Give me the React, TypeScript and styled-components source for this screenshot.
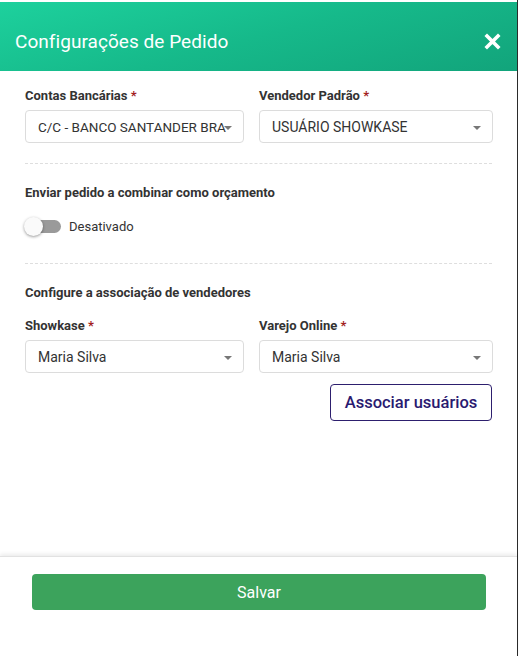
import styled, { createGlobalStyle } from 'styled-components';

const GlobalStyle = createGlobalStyle`
  * { box-sizing: border-box; }
  html, body { margin: 0; padding: 0; background: #fff; }
  body { font-family: Roboto, "Liberation Sans", Arial, sans-serif; color: #333; }
`;

function App() {
  return (
    <>
      <GlobalStyle />
      <Panel>
        <Header>
          <Title>Configurações de Pedido</Title>
          <CloseButton aria-label="Fechar">
            <svg width="17" height="17" viewBox="0 0 17 17">
              <path d="M3 3 L14 14 M14 3 L3 14" stroke="#fff" strokeWidth="3.6" strokeLinecap="square" />
            </svg>
          </CloseButton>
        </Header>

        <Body>
          <Row>
            <Field>
              <Label>
                Contas Bancárias <Req>*</Req>
              </Label>
              <Select>
                <SelectText $small>C/C - BANCO SANTANDER BRA</SelectText>
                <Caret />
              </Select>
            </Field>
            <Field>
              <Label>
                Vendedor Padrão <Req>*</Req>
              </Label>
              <Select>
                <SelectText>USUÁRIO SHOWKASE</SelectText>
                <Caret />
              </Select>
            </Field>
          </Row>

          <Divider />

          <Section>
            <Label>Enviar pedido a combinar como orçamento</Label>
            <SwitchRow>
              <Track>
                <Thumb />
              </Track>
              <SwitchText>Desativado</SwitchText>
            </SwitchRow>
          </Section>

          <Divider />

          <Section>
            <Label>Configure a associação de vendedores</Label>
            <Row $spaced>
              <Field>
                <Label>
                  Showkase <Req>*</Req>
                </Label>
                <Select>
                  <SelectText>Maria Silva</SelectText>
                  <Caret />
                </Select>
              </Field>
              <Field>
                <Label>
                  Varejo Online <Req>*</Req>
                </Label>
                <Select>
                  <SelectText>Maria Silva</SelectText>
                  <Caret />
                </Select>
              </Field>
            </Row>
            <Actions>
              <OutlineButton>Associar usuários</OutlineButton>
            </Actions>
          </Section>
        </Body>

        <Footer>
          <SaveButton>Salvar</SaveButton>
        </Footer>
      </Panel>
    </>
  );
}

export default App;

const Panel = styled.div`
  width: 518px;
  height: 656px;
  padding-top: 2px;
  border-right: 1px solid #2b2b2b;
  display: flex;
  flex-direction: column;
  background: #fff;
`;

const Header = styled.div`
  height: 69px;
  flex-shrink: 0;
  display: flex;
  align-items: center;
  justify-content: space-between;
  padding: 9px 16px 0 15px;
  background: linear-gradient(165deg, #1dd19d 0%, #16b98a 50%, #12a47b 100%);
`;

const Title = styled.h1`
  margin: 0;
  font-size: 19px;
  font-weight: 400;
  color: #fff;
  letter-spacing: 0.05px;
`;

const CloseButton = styled.button`
  border: 0;
  background: none;
  padding: 0;
  width: 17px;
  height: 17px;
  display: flex;
  cursor: pointer;
`;

const Body = styled.div`
  flex: 1;
  padding: 17px 25px 0 25px;
  box-sizing: content-box;
  width: 467px;
`;

const Row = styled.div<{ $spaced?: boolean }>`
  display: grid;
  grid-template-columns: 219px 234px;
  column-gap: 15px;
  margin-top: ${(p) => (p.$spaced ? '11px' : '0')};
`;

const Field = styled.div`
  display: flex;
  flex-direction: column;
`;

const Section = styled.div`
  display: flex;
  flex-direction: column;
`;

const Label = styled.div`
  font-size: 13px;
  font-weight: 700;
  color: #333;
  line-height: 15px;
  margin-bottom: 7px;
  white-space: nowrap;
`;

const Req = styled.span`
  color: #a31f1f;
`;

const Select = styled.div`
  position: relative;
  height: 33px;
  border: 1px solid #dcdcdc;
  border-radius: 4px;
  display: flex;
  align-items: center;
  padding: 0 12px;
  background: #fff;
`;

const SelectText = styled.span<{ $small?: boolean }>`
  font-size: ${(p) => (p.$small ? '13.5px' : '14px')};
  color: #333;
  white-space: nowrap;
  flex: 1;
`;

const Caret = styled.span`
  position: absolute;
  right: 11px;
  top: 15px;
  width: 0;
  height: 0;
  border-left: 4px solid transparent;
  border-right: 4px solid transparent;
  border-top: 4px solid #777;
`;

const Divider = styled.div`
  border-top: 1px dashed #dedede;
  margin: 20px 0 21px;
`;

const SwitchRow = styled.div`
  display: flex;
  align-items: center;
  height: 20px;
  margin-top: 9px;
  margin-bottom: 7px;
`;

const Track = styled.div`
  position: relative;
  width: 34px;
  height: 13px;
  border-radius: 7px;
  background: #9a9a9a;
  margin-left: 2px;
`;

const Thumb = styled.span`
  position: absolute;
  left: -3px;
  top: -3px;
  width: 19px;
  height: 19px;
  border-radius: 50%;
  background: #fafafa;
  box-shadow: 0 1px 3px rgba(0, 0, 0, 0.4);
`;

const SwitchText = styled.span`
  font-size: 13px;
  color: #333;
  margin-left: 8px;
`;

const Actions = styled.div`
  display: flex;
  justify-content: flex-end;
  margin-top: 11px;
`;

const OutlineButton = styled.button`
  width: 162px;
  height: 37px;
  border: 1px solid #2d1f6e;
  border-radius: 4px;
  background: #fff;
  color: #2a1a70;
  font-family: Roboto, "Liberation Sans", Arial, sans-serif;
  font-size: 16.5px;
  font-weight: 500;
  cursor: pointer;
`;

const Footer = styled.div`
  height: 100px;
  flex-shrink: 0;
  box-shadow: 0 -2px 4px rgba(0, 0, 0, 0.08);
  border-top: 1px solid #e2e2e2;
  padding: 17px 32px 0 32px;
`;

const SaveButton = styled.button`
  width: 454px;
  height: 36px;
  border: 0;
  border-radius: 4px;
  background: #3ca35c;
  color: #fff;
  font-family: Roboto, "Liberation Sans", Arial, sans-serif;
  font-size: 16px;
  font-weight: 400;
  cursor: pointer;
`;
